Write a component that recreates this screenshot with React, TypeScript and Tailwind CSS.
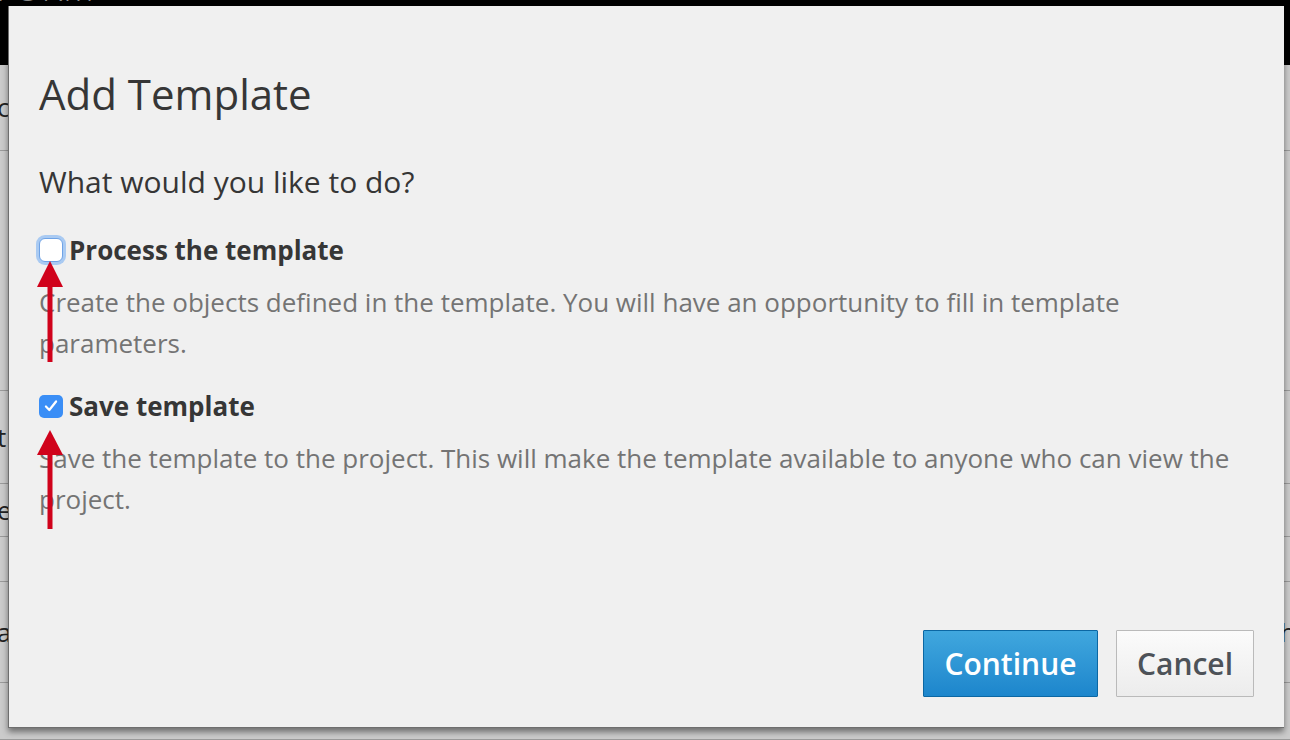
import React from 'react';

const rows = [
  { h: 86, left: 'c', right: '' },
  { h: 240, left: '', right: '' },
  { h: 93, left: 't', right: '' },
  { h: 53, left: 'e', right: '' },
  { h: 45, left: '', right: '' },
  { h: 101, left: 'a', right: 'h' },
  { h: 57, left: '', right: '' },
];

function Checkbox({ checked }: { checked: boolean }) {
  if (checked) {
    return (
      <span className="flex h-[23px] w-[24px] shrink-0 items-center justify-center rounded-[5px] bg-[#3a8ef6]">
        <svg viewBox="0 0 16 16" className="h-[18px] w-[18px]" fill="none" stroke="white" strokeWidth="2" strokeLinecap="round" strokeLinejoin="round">
          <path d="M3.5 8.5l3 3 6-7.5" />
        </svg>
      </span>
    );
  }
  return (
    <span className="flex h-[24px] w-[24px] shrink-0 rounded-[6px] border-[1.5px] border-[#6fa3e6] bg-white shadow-[0_0_0_3px_#a9caf2]" />
  );
}

function Option({ checked, label, text, className }: { checked: boolean; label: string; text: string; className: string }) {
  return (
    <div className={className}>
      <div className="flex items-center gap-[6px]">
        <Checkbox checked={checked} />
        <span className="text-[26px] font-bold leading-[26px] text-[#363636]">{label}</span>
      </div>
      <p className="mt-[19px] text-[26px] leading-[41px] text-[#747474]">{text}</p>
    </div>
  );
}

export default function App() {
  return (
    <div className="relative h-[740px] w-[1290px] overflow-hidden bg-[#cbcbcb] font-['Open_Sans',sans-serif]">
      {/* page behind the backdrop */}
      <div className="h-[65px] overflow-hidden bg-black">
        <div className="-ml-[84px] -mt-[30px] text-[36px] font-light leading-[36px] text-[#8a8a8a]">PLATFORM</div>
      </div>
      {rows.map((row, i) => (
        <div key={i} style={{ height: row.h }} className="flex items-center justify-between border-b border-[#9a9a9a] text-[26px] text-[#222]">
          <span className="-ml-[3px]">{row.left}</span>
          <span className="-mr-[6px]">{row.right}</span>
        </div>
      ))}

      {/* modal */}
      <div className="absolute left-[8px] top-[6px] flex h-[722px] w-[1276px] flex-col border-b border-l border-[#6e6e6e] bg-[#f0f0f0] px-[30px] pb-[30px] pt-[67px] shadow-[0_4px_6px_rgba(0,0,0,0.45)]">
        <h1 className="text-[42px] font-normal leading-[42px] text-[#363636]">Add Template</h1>
        <p className="mt-[52px] text-[30px] leading-[30px] text-[#363636]">What would you like to do?</p>
        <Option
          className="mt-[40px]"
          checked={false}
          label="Process the template"
          text="Create the objects defined in the template. You will have an opportunity to fill in template parameters."
        />
        <Option
          className="mt-[29px]"
          checked
          label="Save template"
          text="Save the template to the project. This will make the template available to anyone who can view the project."
        />
        <div className="mt-auto flex justify-end gap-[18px]">
          <button className="h-[67px] w-[175px] rounded-[1px] border border-[#0b67a3] bg-gradient-to-b from-[#40a7de] to-[#1c86cc] text-[30px] font-semibold text-white">
            Continue
          </button>
          <button className="h-[67px] w-[138px] rounded-[1px] border border-[#bababa] bg-gradient-to-b from-[#fbfbfb] to-[#ececec] text-[30px] font-semibold text-[#4d5258]">
            Cancel
          </button>
        </div>
      </div>

      {/* red annotation arrows */}
      <svg className="pointer-events-none absolute left-0 top-0 h-[560px] w-[100px]" viewBox="0 0 100 560">
        <polygon points="50,261 37,287 63,287" fill="#d0021b" />
        <rect x="47.5" y="285" width="5" height="77" fill="#d0021b" />
        <polygon points="50,430 37,455 63,455" fill="#d0021b" />
        <rect x="47.5" y="453" width="5" height="76" fill="#d0021b" />
      </svg>
    </div>
  );
}
